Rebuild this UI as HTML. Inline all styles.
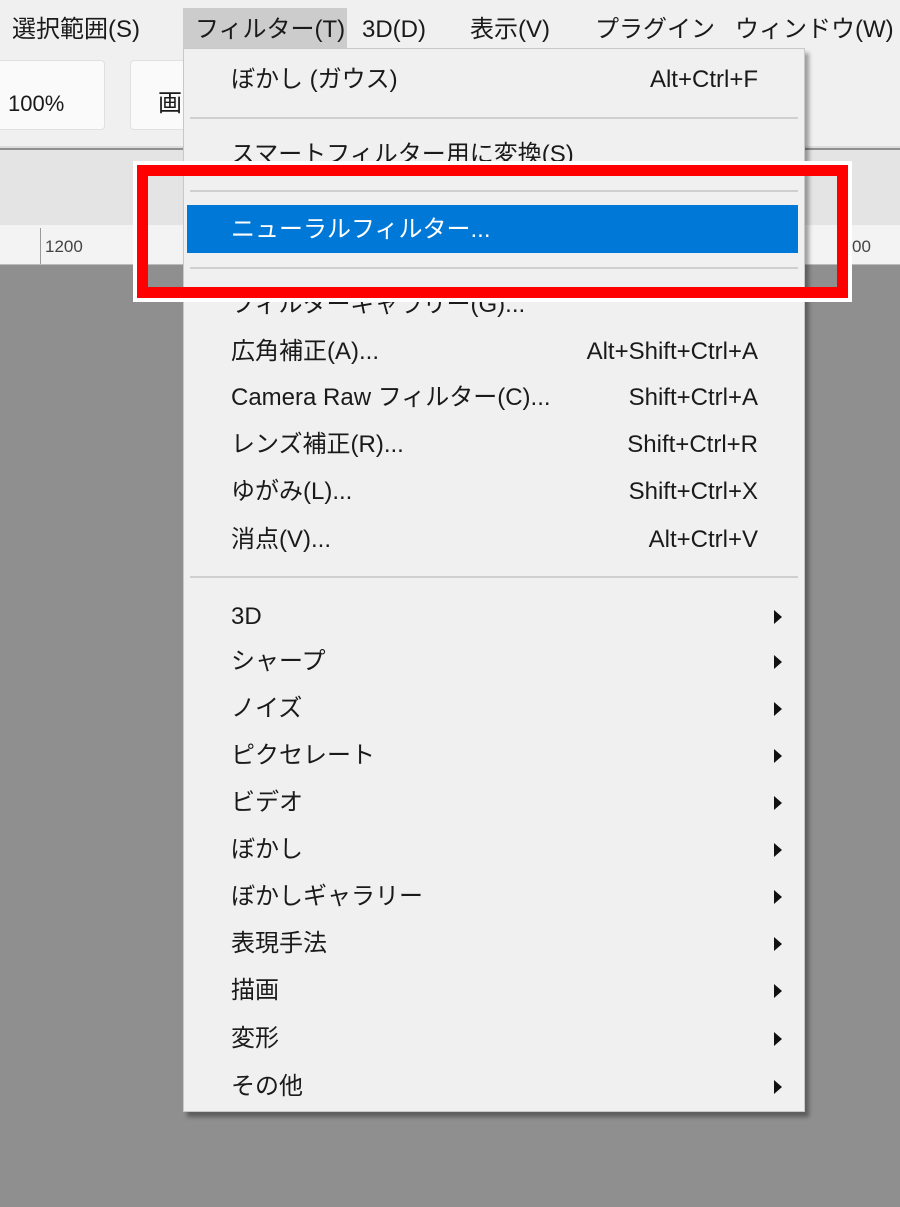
<!DOCTYPE html>
<html><head><meta charset="utf-8"><style>
*{margin:0;padding:0;box-sizing:border-box}
body{width:900px;height:1207px;position:relative;overflow:hidden;background:#8f8f8f;font-family:"Liberation Sans","Noto Sans CJK JP",sans-serif;color:#1a1a1a}
.abs{position:absolute}
.t{position:absolute;font-size:24px;line-height:30px;white-space:nowrap;transform:translateY(-15px)}
.sc{position:absolute;right:142px;font-size:24px;line-height:30px;white-space:nowrap;transform:translateY(-15px)}
.arr{position:absolute;left:774px;width:0;height:0;border-top:7px solid transparent;border-bottom:7px solid transparent;border-left:8px solid #111;transform:translateY(-7px)}
.sep{position:absolute;left:190px;width:608px;height:2px;background:#cfcfcf}
</style></head><body>
<div class="abs" style="left:0;top:0;width:900px;height:48px;background:#f0f0f0"></div>
<div class="abs" style="left:183px;top:8px;width:164px;height:42px;background:#cccccc"></div>
<div class="t" style="left:12px;top:30px">選択範囲(S)</div>
<div class="t" style="left:195px;top:30px">フィルター(T)</div>
<div class="t" style="left:362px;top:30px">3D(D)</div>
<div class="t" style="left:470px;top:30px">表示(V)</div>
<div class="t" style="left:595px;top:30px">プラグイン</div>
<div class="t" style="left:735px;top:30px">ウィンドウ(W)</div>
<div class="abs" style="left:0;top:48px;width:900px;height:100px;background:#f0f0f0;border-bottom:2px solid #dcdcdc"></div>
<div class="abs" style="left:-10px;top:60px;width:115px;height:70px;background:#fafafa;border:1px solid #e0e0e0;border-radius:4px"></div>
<div class="t" style="left:8px;top:104px;font-size:22px">100%</div>
<div class="abs" style="left:130px;top:60px;width:80px;height:70px;background:#fafafa;border:1px solid #e0e0e0;border-radius:4px"></div>
<div class="t" style="left:158px;top:104px">画</div>
<div class="abs" style="left:0;top:150px;width:900px;height:75px;background:#e4e4e4"></div>
<div class="abs" style="left:0;top:225px;width:900px;height:40px;background:#f3f3f3;border-bottom:1px solid #bbb"></div>
<div class="abs" style="left:40px;top:228px;width:1px;height:36px;background:#999"></div>
<div class="t" style="left:45px;top:247px;font-size:17px;color:#444">1200</div>
<div class="t" style="left:852px;top:247px;font-size:17px;color:#444">00</div>
<div class="abs" style="left:183px;top:48px;width:622px;height:1064px;background:#f0f0f0;border:1px solid #c8c8c8;box-shadow:4px 5px 4px rgba(0,0,0,.35)"></div>
<div class="t" style="left:231px;top:80px">ぼかし (ガウス)</div><div class="sc" style="top:80px">Alt+Ctrl+F</div>
<div class="sep" style="top:117px"></div>
<div class="t" style="left:231px;top:155px">スマートフィルター用に変換(S)</div>
<div class="sep" style="top:190px"></div>
<div class="abs" style="left:187px;top:205px;width:611px;height:48px;background:#0078d7"></div>
<div class="t" style="left:231px;top:230px;color:#fff">ニューラルフィルター...</div>
<div class="sep" style="top:267px"></div>
<div class="t" style="left:231px;top:305px">フィルターギャラリー(G)...</div>
<div class="t" style="left:231px;top:352px">広角補正(A)...</div><div class="sc" style="top:352px">Alt+Shift+Ctrl+A</div>
<div class="t" style="left:231px;top:398px">Camera Raw フィルター(C)...</div><div class="sc" style="top:398px">Shift+Ctrl+A</div>
<div class="t" style="left:231px;top:445px">レンズ補正(R)...</div><div class="sc" style="top:445px">Shift+Ctrl+R</div>
<div class="t" style="left:231px;top:492px">ゆがみ(L)...</div><div class="sc" style="top:492px">Shift+Ctrl+X</div>
<div class="t" style="left:231px;top:540px">消点(V)...</div><div class="sc" style="top:540px">Alt+Ctrl+V</div>
<div class="sep" style="top:576px"></div>
<div class="t" style="left:231px;top:617px">3D</div><div class="arr" style="top:617px"></div>
<div class="t" style="left:231px;top:662px">シャープ</div><div class="arr" style="top:662px"></div>
<div class="t" style="left:231px;top:709px">ノイズ</div><div class="arr" style="top:709px"></div>
<div class="t" style="left:231px;top:756px">ピクセレート</div><div class="arr" style="top:756px"></div>
<div class="t" style="left:231px;top:803px">ビデオ</div><div class="arr" style="top:803px"></div>
<div class="t" style="left:231px;top:850px">ぼかし</div><div class="arr" style="top:850px"></div>
<div class="t" style="left:231px;top:897px">ぼかしギャラリー</div><div class="arr" style="top:897px"></div>
<div class="t" style="left:231px;top:944px">表現手法</div><div class="arr" style="top:944px"></div>
<div class="t" style="left:231px;top:991px">描画</div><div class="arr" style="top:991px"></div>
<div class="t" style="left:231px;top:1039px">変形</div><div class="arr" style="top:1039px"></div>
<div class="t" style="left:231px;top:1087px">その他</div><div class="arr" style="top:1087px"></div>
<div class="abs" style="left:137px;top:165px;width:711px;height:133px;border:11px solid #f00;outline:4px solid #fff"></div>
</body></html>
